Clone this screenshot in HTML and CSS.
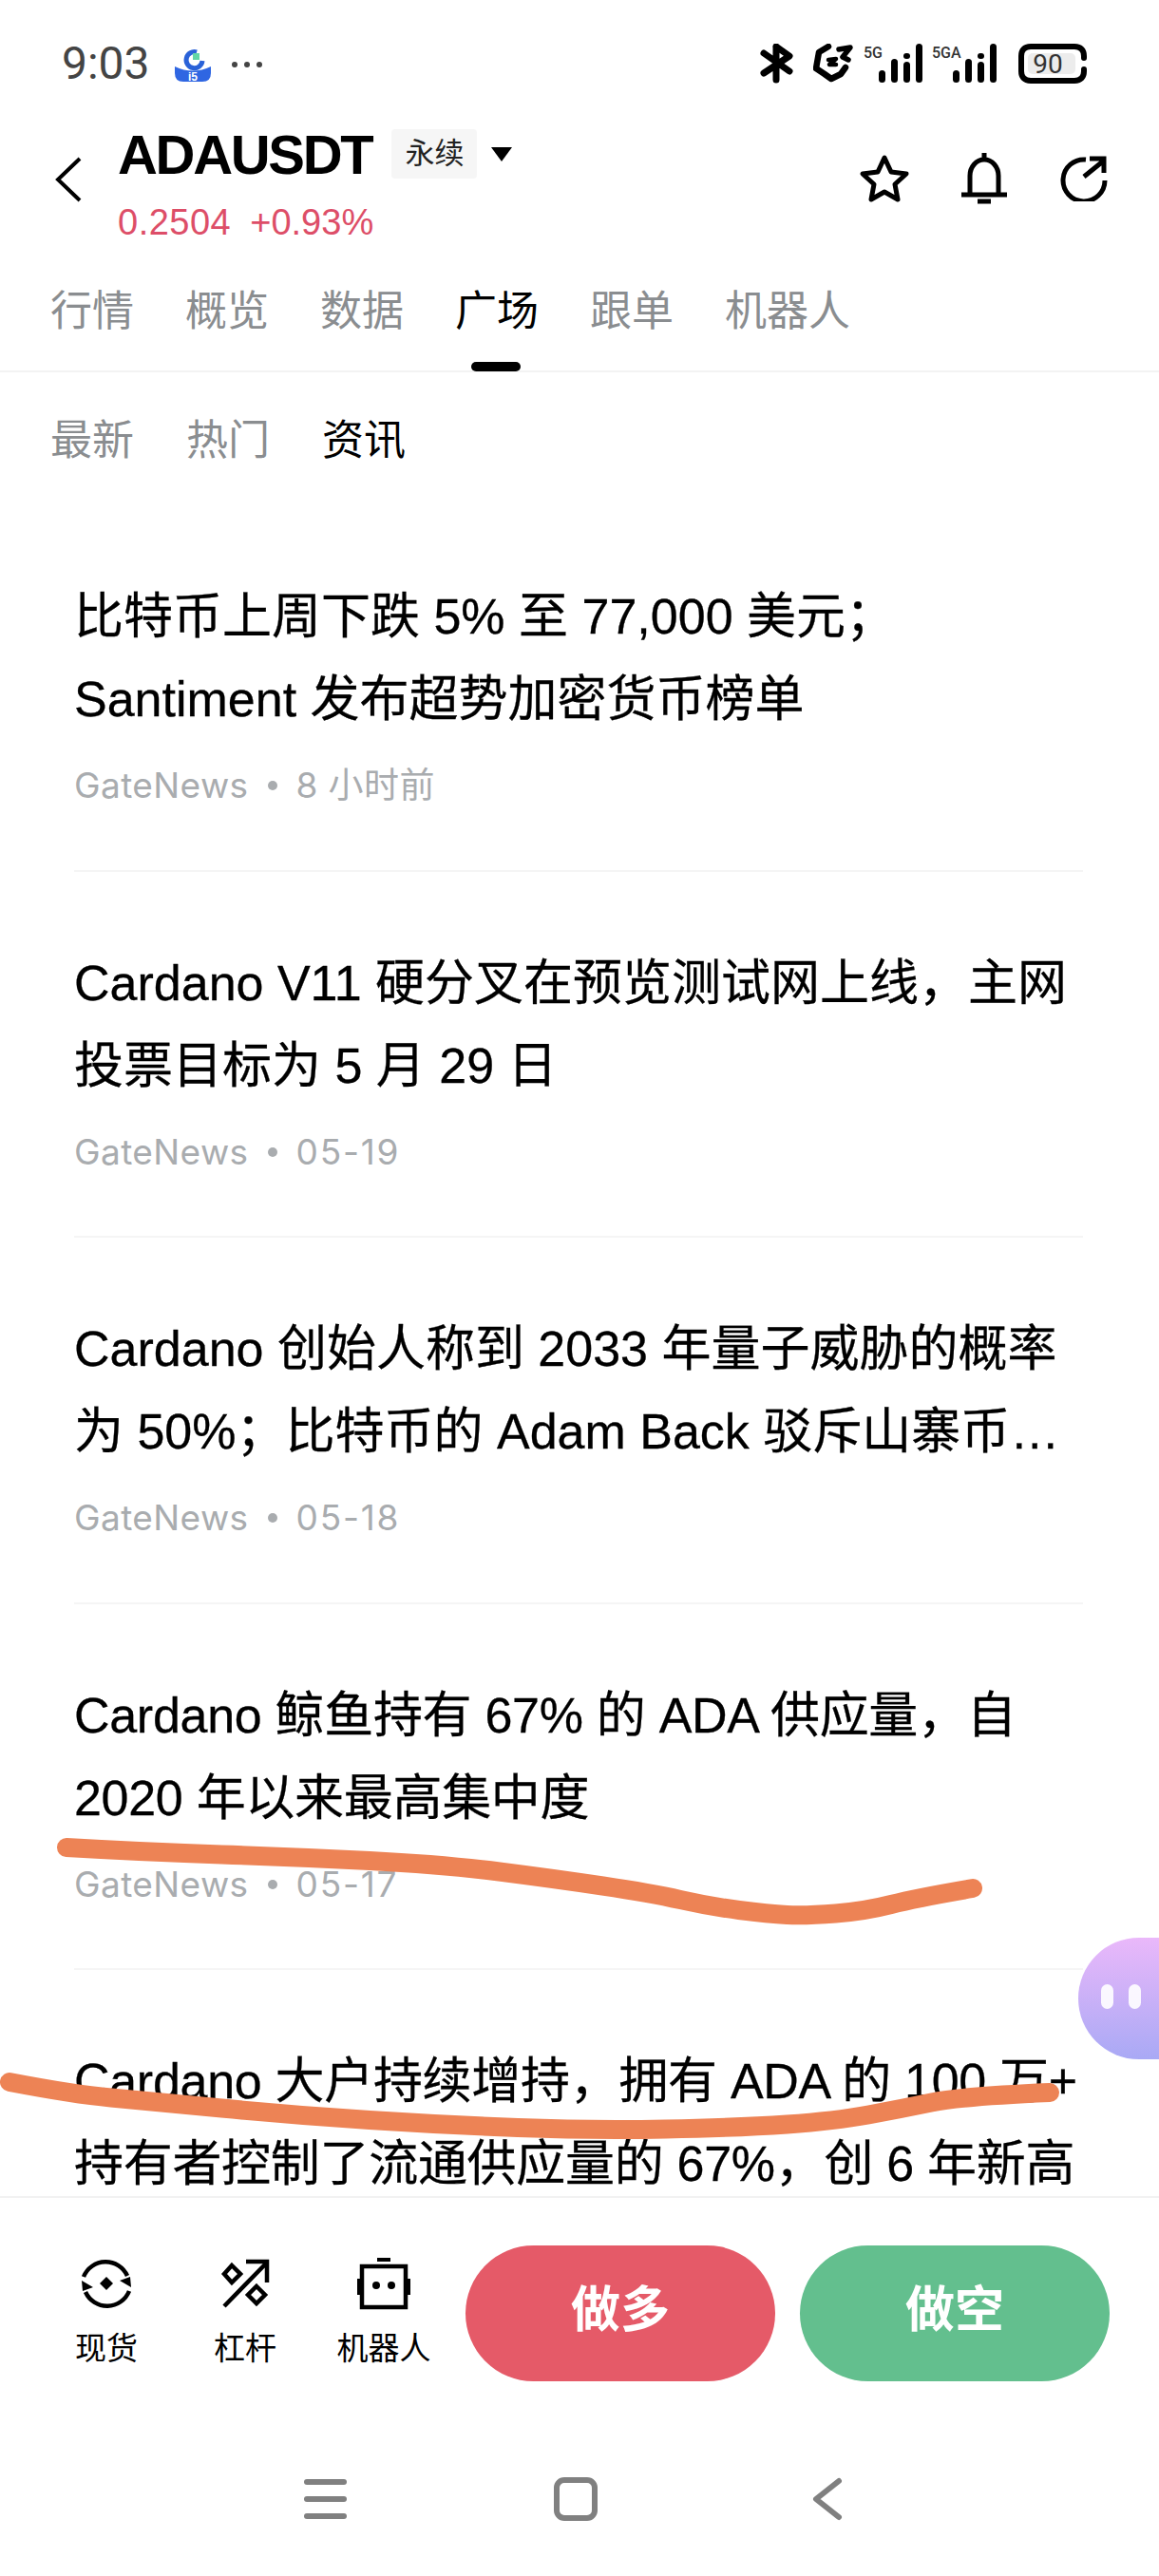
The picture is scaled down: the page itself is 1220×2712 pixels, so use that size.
FILE: index.html
```html
<!DOCTYPE html>
<html lang="zh-CN">
  <head>
    <meta charset="UTF-8" />
    <meta name="viewport" content="width=device-width, initial-scale=1.0" />
    <title>ADAUSDT 永续</title>
    <link rel="stylesheet" href="styles.css">
  </head>
  <body>
    <div class="page">
      <div class="status-bar">
        <div class="status-left">
          <span class="status-time">9:03</span>
          <svg class="status-app" viewBox="0 0 40 36">
            <path d="M24 4a8.5 8.5 0 1 0 6 9" fill="none" stroke="#2a62d8" stroke-width="5" />
            <rect x="20" y="5" width="7" height="7" fill="#63d6a6" />
            <path d="M1 19q19 9 38 0v7q0 9-9 9H10q-9 0-9-9z" fill="#2f66e2" />
            <text x="20" y="34" class="status-app-text">i5</text>
          </svg>
          <div class="status-dots"><i></i><i></i><i></i></div>
        </div>
        <div class="status-right">
          <svg class="icon-bt" viewBox="0 0 36 42">
            <path d="M4 10l27 19M17 3v35M17 3l14 10L4 31" fill="none" stroke="#000" stroke-width="7" stroke-linecap="round" stroke-linejoin="round" />
          </svg>
          <svg class="icon-nfc" viewBox="0 0 42 42">
            <path d="M16 3L6 9 3 26l9 6 7 5 10-5 5-7" fill="none" stroke="#000" stroke-width="6.5" stroke-linecap="round" stroke-linejoin="round" />
            <path d="M27 6l12-2-8 10 6 3" fill="none" stroke="#000" stroke-width="5.5" stroke-linecap="round" stroke-linejoin="round" />
            <path d="M16 17l8-1-7 6h7" fill="none" stroke="#000" stroke-width="4.5" stroke-linecap="round" stroke-linejoin="round" />
          </svg>
          <svg class="icon-signal" viewBox="0 0 62 42">
            <text x="0" y="15" class="signal-text">5G</text>
            <rect x="16" y="28" width="7" height="13" rx="3.5" />
            <rect x="29" y="16" width="7" height="25" rx="3.5" />
            <rect x="42" y="10" width="7" height="6" rx="3" />
            <rect x="42" y="19" width="7" height="22" rx="3.5" />
            <rect x="55" y="0" width="7" height="41" rx="3.5" />
          </svg>
          <svg class="icon-signal icon-signal-wide" viewBox="0 0 68 42">
            <text x="0" y="15" class="signal-text">5GA</text>
            <rect x="22" y="28" width="7" height="13" rx="3.5" />
            <rect x="35" y="16" width="7" height="25" rx="3.5" />
            <rect x="48" y="10" width="7" height="6" rx="3" />
            <rect x="48" y="19" width="7" height="22" rx="3.5" />
            <rect x="61" y="0" width="7" height="41" rx="3.5" />
          </svg>
          <svg class="icon-battery" viewBox="0 0 72 42">
            <rect x="10" y="10" width="50" height="22" rx="5" fill="#ececec" />
            <path d="M69 15v-2c0-6-3-10-10-10H13C6 3 3 7 3 13v16c0 6 3 10 10 10h46c7 0 10-4 10-10v-2" fill="none" stroke="#000" stroke-width="6" stroke-linecap="round" />
            <text x="31" y="31" class="battery-text">90</text>
          </svg>
        </div>
      </div>

      <div class="header">
        <svg class="back-icon" viewBox="0 0 28 48">
          <path d="M26 2L3 24l23 22" fill="none" stroke="#000" stroke-width="4" />
        </svg>
        <div class="header-main">
          <div class="symbol-row">
            <span class="symbol">ADAUSDT</span>
            <span class="symbol-tag">永续</span>
            <span class="symbol-caret"></span>
          </div>
          <div class="price-row">
            <span class="price-last">0.2504</span>
            <span>+0.93%</span>
          </div>
        </div>
        <div class="header-actions">
          <svg class="action-star" viewBox="0 0 54 52">
            <path d="M27 4l7 15 16 2-12 11 3 16-14-8-14 8 3-16L4 21l16-2z" fill="none" stroke="#000" stroke-width="5" stroke-linejoin="round" />
          </svg>
          <svg class="action-bell" viewBox="0 0 48 54">
            <path d="M24 0v6M9 42V24a15 17 0 0 1 30 0v18M0 44h48M17 51h14" fill="none" stroke="#000" stroke-width="5" />
          </svg>
          <svg class="action-share" viewBox="0 0 50 48">
            <path d="M27 4A22 22 0 1 0 47 26M25 22L46 5M31 3h15v15" fill="none" stroke="#000" stroke-width="5" />
          </svg>
        </div>
      </div>

      <div class="tabs">
        <span class="tab">行情</span>
        <span class="tab">概览</span>
        <span class="tab">数据</span>
        <span class="tab tab-active">广场</span>
        <span class="tab">跟单</span>
        <span class="tab">机器人</span>
      </div>

      <div class="subtabs">
        <span class="subtab">最新</span>
        <span class="subtab">热门</span>
        <span class="subtab subtab-active">资讯</span>
      </div>

      <div class="news-list">
        <div class="news-item">
          <div class="news-title">比特币上周下跌 5% 至 77,000 美元；<br>Santiment 发布超势加密货币榜单</div>
          <div class="news-meta"><span>GateNews</span><i></i><span>8 小时前</span></div>
        </div>
        <div class="news-item">
          <div class="news-title">Cardano V11 硬分叉在预览测试网上线，主网<br>投票目标为 5 月 29 日</div>
          <div class="news-meta"><span>GateNews</span><i></i><span class="news-date">05-19</span></div>
        </div>
        <div class="news-item">
          <div class="news-title">Cardano 创始人称到 2033 年量子威胁的概率<br>为 50%；比特币的 Adam Back 驳斥山寨币…</div>
          <div class="news-meta"><span>GateNews</span><i></i><span class="news-date">05-18</span></div>
        </div>
        <div class="news-item">
          <div class="news-title news-title-tight">Cardano 鲸鱼持有 67% 的 ADA 供应量，自<br>2020 年以来最高集中度</div>
          <div class="news-meta"><span>GateNews</span><i></i><span class="news-date">05-17</span></div>
        </div>
        <div class="news-item">
          <div class="news-title news-title-tight">Cardano 大户持续增持，拥有 ADA 的 100 万+<br>持有者控制了流通供应量的 67%，创 6 年新高</div>
        </div>
      </div>

      <div class="trade-bar">
        <div class="trade-links">
          <div class="trade-link">
            <svg class="trade-icon" viewBox="0 0 56 56">
              <path d="M4 21A25 25 0 0 1 50 20M52 36A25 25 0 0 1 6 37" fill="none" stroke="#000" stroke-width="4.5" />
              <path d="M54 32l-12-7 11-4zM2 25l12 7-11 4z" />
              <path d="M28 21l7 7-7 7-7-7z" />
            </svg>
            <span>现货</span>
          </div>
          <div class="trade-link">
            <svg class="trade-icon" viewBox="0 0 56 56">
              <path d="M6 52L50 7M29 5h22v22" fill="none" stroke="#000" stroke-width="4.5" />
              <path d="M14 9l9 9-9 9-8-9zM40 31l9 9-9 9-9-9z" fill="none" stroke="#000" stroke-width="4.5" />
            </svg>
            <span>杠杆</span>
          </div>
          <div class="trade-link">
            <svg class="trade-icon" viewBox="0 0 56 56">
              <rect x="21" y="1" width="14" height="4" />
              <rect x="5" y="10" width="46" height="43" fill="none" stroke="#000" stroke-width="4.5" />
              <rect x="0" y="23" width="3" height="17" />
              <rect x="53" y="23" width="3" height="17" />
              <circle cx="20" cy="30" r="4" />
              <circle cx="36" cy="30" r="4" />
            </svg>
            <span>机器人</span>
          </div>
        </div>
        <div class="trade-btn trade-btn-long">做多</div>
        <div class="trade-btn trade-btn-short">做空</div>
      </div>

      <div class="nav-bar">
        <div class="nav-menu"><i></i><i></i><i></i></div>
        <div class="nav-home"></div>
        <svg class="nav-back" viewBox="0 0 32 46">
          <path d="M28 4L4 23l24 19" fill="none" stroke="#808080" stroke-width="6" stroke-linecap="round" stroke-linejoin="round" />
        </svg>
      </div>

      <!-- pen marks on top of the list -->
      <svg class="ink" viewBox="0 0 1220 2712">
        <path d="M70 1945Q156 1950 233.5 1952.5Q311 1955 389 1959Q467 1963 525.5 1970.5Q584 1978 634.5 1985.5Q685 1993 716 2000Q747 2007 778 2011Q809 2015 828.5 2016Q848 2017 879.5 2014.5Q911 2012 938 2005Q965 1998 1024 1988" />
        <path d="M10 2192Q78 2205 117 2208.5Q156 2212 233.5 2219.5Q311 2227 389 2232Q467 2237 545 2240Q623 2243 700.5 2241.5Q778 2240 828.5 2236.5Q879 2233 914 2226.5Q949 2220 980.5 2213.5Q1012 2207 1105 2203" />
      </svg>

      <div class="bubble"><i></i><i></i></div>
    </div>
  </body>
</html>
```

FILE: styles.css
```css
* {
  box-sizing: border-box;
}

body {
  margin: 0;
  background: #fff;
  font-family: "Liberation Sans", "Noto Sans CJK SC", sans-serif;
}

.page {
  position: relative;
  width: 1220px;
  height: 2712px;
  overflow: hidden;
  display: flex;
  flex-direction: column;
  color: #000;
}

/* status bar */
.status-bar {
  height: 120px;
  flex: none;
  display: flex;
  justify-content: space-between;
  padding: 46px 76px 0 65px;
}

.status-left {
  display: flex;
  align-items: flex-start;
}

.status-time {
  font-family: "Roboto", sans-serif;
  font-size: 48px;
  line-height: 42px;
  color: #444;
}

.status-app {
  width: 40px;
  height: 36px;
  margin: 5px 0 0 25px;
}

.status-app-text {
  font-size: 12px;
  font-weight: bold;
  fill: #fff;
  text-anchor: middle;
}

.status-dots {
  display: flex;
  gap: 7px;
  margin: 19px 0 0 21px;
}

.status-dots i {
  width: 6px;
  height: 6px;
  border-radius: 50%;
  background: #444;
}

.status-right {
  display: flex;
  align-items: flex-start;
}

.icon-bt {
  width: 36px;
  height: 42px;
}

.icon-nfc {
  width: 42px;
  height: 42px;
  margin-left: 20px;
}

.icon-signal {
  width: 62px;
  height: 42px;
  margin-left: 11px;
}

.icon-signal-wide {
  width: 68px;
  margin-left: 10px;
}

.signal-text {
  font-family: "Roboto", sans-serif;
  font-size: 16px;
  font-weight: 500;
  fill: #333;
}

.icon-battery {
  width: 72px;
  height: 42px;
  margin-left: 23px;
}

.battery-text {
  font-family: "Roboto", sans-serif;
  font-size: 28px;
  fill: #333;
  text-anchor: middle;
}

/* symbol header */
.header {
  height: 150px;
  flex: none;
  display: flex;
  padding-left: 58px;
}

.back-icon {
  width: 28px;
  height: 48px;
  margin-top: 45px;
}

.header-main {
  margin-left: 38px;
}

.symbol-row {
  display: flex;
  align-items: center;
  height: 70px;
  margin-top: 7px;
}

.symbol {
  font-size: 58px;
  font-weight: bold;
  letter-spacing: -2.3px;
}

.symbol-tag {
  width: 90px;
  height: 52px;
  margin-left: 21px;
  background: #f6f6f6;
  border-radius: 4px;
  font-size: 31px;
  line-height: 52px;
  text-align: center;
  color: #222;
}

.symbol-caret {
  width: 0;
  height: 0;
  margin-left: 15px;
  border-left: 11px solid transparent;
  border-right: 11px solid transparent;
  border-top: 15px solid #000;
}

.price-row {
  display: flex;
  gap: 20px;
  margin-top: 15px;
  font-size: 38px;
  line-height: 44px;
  color: #dd4e68;
}

.price-last {
  letter-spacing: 0.5px;
}

.header-actions {
  display: flex;
  align-items: center;
  margin-left: auto;
  margin-right: 54px;
  height: 56px;
  margin-top: 40px;
}

.action-star {
  width: 54px;
  height: 52px;
}

.action-bell {
  width: 48px;
  height: 54px;
  margin-left: 54px;
}

.action-share {
  width: 50px;
  height: 48px;
  margin-left: 56px;
}

/* tabs */
.tabs {
  height: 122px;
  flex: none;
  display: flex;
  gap: 54px;
  padding: 28px 0 0 53px;
  border-bottom: 2px solid #f3f3f3;
  font-size: 44px;
  line-height: 60px;
  color: #8a8d90;
}

.tab-active {
  position: relative;
  color: #000;
}

.tab-active::after {
  content: "";
  position: absolute;
  left: 17px;
  bottom: -1px;
  width: 52px;
  height: 10px;
  border-radius: 5px;
  background: #000;
}

.subtabs {
  height: 140px;
  flex: none;
  display: flex;
  gap: 55px;
  padding: 42px 0 0 53px;
  font-size: 44px;
  line-height: 60px;
  color: #8a8d90;
}

.subtab-active {
  color: #000;
}

/* news list */
.news-list {
  flex: 1;
  min-height: 0;
  overflow: hidden;
  padding: 0 80px 0 78px;
  border-bottom: 2px solid #f2f2f2;
}

.news-item {
  height: 385.5px;
  padding-top: 74px;
  border-bottom: 2px solid #f5f5f5;
}

.news-title {
  font-size: 52px;
  line-height: 87px;
  white-space: nowrap;
  -webkit-text-stroke: 0.3px #000;
}

.news-title-tight {
  letter-spacing: -0.3px;
}

.news-meta {
  display: flex;
  align-items: center;
  gap: 20px;
  margin-top: 22px;
  font-family: "Inter", "Noto Sans CJK SC", sans-serif;
  font-size: 37px;
  line-height: 50px;
  letter-spacing: 0.4px;
  color: #a9acaf;
}

.news-meta i {
  width: 10px;
  height: 10px;
  border-radius: 50%;
  background: #a9acaf;
}

.news-date {
  letter-spacing: 1.8px;
}

/* bottom trade bar */
.trade-bar {
  height: 226px;
  flex: none;
  display: flex;
  align-items: flex-start;
  padding: 50px 52px 0 0;
}

.trade-links {
  display: flex;
  width: 490px;
  padding: 12px 0 0 39px;
}

.trade-link {
  display: flex;
  flex-direction: column;
  align-items: center;
  width: 146px;
  gap: 19px;
  font-size: 33px;
  line-height: 44px;
}

.trade-icon {
  width: 56px;
  height: 56px;
}

.trade-btn {
  width: 326px;
  height: 143px;
  border-radius: 72px;
  font-size: 52px;
  font-weight: bold;
  line-height: 136px;
  text-align: center;
  color: #fff;
}

.trade-btn-long {
  background: #e55a68;
}

.trade-btn-short {
  margin-left: 26px;
  background: #63bf8e;
}

/* system navigation */
.nav-bar {
  height: 172px;
  flex: none;
  display: flex;
  align-items: flex-start;
  padding: 0 0 0 320px;
}

.nav-menu {
  display: flex;
  flex-direction: column;
  gap: 12px;
  width: 45px;
  margin-top: 70px;
}

.nav-menu i {
  height: 6px;
  border-radius: 3px;
  background: #808080;
}

.nav-home {
  width: 46px;
  height: 46px;
  margin: 68px 0 0 218px;
  border: 6px solid #808080;
  border-radius: 11px;
}

.nav-back {
  width: 32px;
  height: 46px;
  margin: 68px 0 0 226px;
}

/* overlays */
.ink {
  position: absolute;
  inset: 0;
  width: 1220px;
  height: 2712px;
  fill: none;
  stroke: #ed8355;
  stroke-width: 20;
  stroke-linecap: round;
  stroke-linejoin: round;
}

.bubble {
  position: absolute;
  right: 0;
  top: 2040px;
  width: 85px;
  height: 128px;
  display: flex;
  gap: 16px;
  padding: 49px 0 0 24px;
  border-radius: 64px 0 0 64px;
  background: linear-gradient(#eab8fa, #a9a9f5);
}

.bubble i {
  width: 13px;
  height: 26px;
  border-radius: 7px;
  background: #fff;
  opacity: 0.9;
}
```
